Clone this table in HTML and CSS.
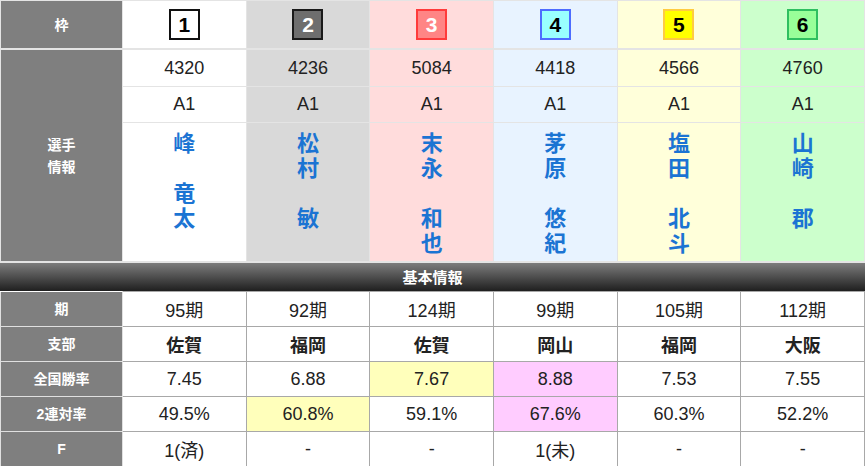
FILE: index.html
```html
<!DOCTYPE html>
<html lang="ja">
<head>
<meta charset="utf-8">
<title>出走表</title>
<link rel="stylesheet" href="styles.css">
</head>
<body>
<div class="racer-info">
  <table class="entry">
    <colgroup><col class="c-label"><col><col><col><col><col><col></colgroup>
    <tr class="r-head">
      <th class="lbl">枠</th>
      <td class="bg1"><span class="waku wk1">1</span></td>
      <td class="bg2"><span class="waku wk2">2</span></td>
      <td class="bg3"><span class="waku wk3">3</span></td>
      <td class="bg4"><span class="waku wk4">4</span></td>
      <td class="bg5"><span class="waku wk5">5</span></td>
      <td class="bg6"><span class="waku wk6">6</span></td>
    </tr>
    <tr class="r-num">
      <th class="lbl" rowspan="3">選手<br>情報</th>
      <td class="bg1">4320</td>
      <td class="bg2">4236</td>
      <td class="bg3">5084</td>
      <td class="bg4">4418</td>
      <td class="bg5">4566</td>
      <td class="bg6">4760</td>
    </tr>
    <tr class="r-cls">
      <td class="bg1">A1</td>
      <td class="bg2">A1</td>
      <td class="bg3">A1</td>
      <td class="bg4">A1</td>
      <td class="bg5">A1</td>
      <td class="bg6">A1</td>
    </tr>
    <tr class="r-name">
      <td class="bg1"><a class="name"><span>峰</span><span></span><span>竜</span><span>太</span></a></td>
      <td class="bg2"><a class="name"><span>松</span><span>村</span><span></span><span>敏</span></a></td>
      <td class="bg3"><a class="name"><span>末</span><span>永</span><span></span><span>和</span><span>也</span></a></td>
      <td class="bg4"><a class="name"><span>茅</span><span>原</span><span></span><span>悠</span><span>紀</span></a></td>
      <td class="bg5"><a class="name"><span>塩</span><span>田</span><span></span><span>北</span><span>斗</span></a></td>
      <td class="bg6"><a class="name"><span>山</span><span>崎</span><span></span><span>郡</span></a></td>
    </tr>
  </table>

  <div class="section-bar">基本情報</div>

  <table class="basic">
    <colgroup><col class="c-label"><col><col><col><col><col><col></colgroup>
    <tr>
      <th class="lbl">期</th>
      <td>95期</td><td>92期</td><td>124期</td><td>99期</td><td>105期</td><td>112期</td>
    </tr>
    <tr class="branch">
      <th class="lbl">支部</th>
      <td>佐賀</td><td>福岡</td><td>佐賀</td><td>岡山</td><td>福岡</td><td>大阪</td>
    </tr>
    <tr>
      <th class="lbl">全国勝率</th>
      <td>7.45</td><td>6.88</td><td class="hi-2">7.67</td><td class="hi-1">8.88</td><td>7.53</td><td>7.55</td>
    </tr>
    <tr>
      <th class="lbl">2連対率</th>
      <td>49.5%</td><td class="hi-2">60.8%</td><td>59.1%</td><td class="hi-1">67.6%</td><td>60.3%</td><td>52.2%</td>
    </tr>
    <tr>
      <th class="lbl">F</th>
      <td>1(済)</td><td>-</td><td>-</td><td>1(未)</td><td>-</td><td>-</td>
    </tr>
  </table>
</div>
</body>
</html>
```

FILE: styles.css
```css
html, body {
  margin: 0;
  padding: 0;
  background: #ffffff;
}

body {
  font-family: "Liberation Sans", Arial, "Noto Sans CJK JP", sans-serif;
  color: #222222;
  width: 865px;
  overflow: hidden;
}

.racer-info {
  width: 865px;
}

table {
  width: 865px;
  table-layout: fixed;
  border-collapse: collapse;
}

.c-label {
  width: 122px;
}

th.lbl {
  background: #7f7f7f;
  color: #ffffff;
  font-weight: bold;
  font-size: 14px;
  line-height: 22px;
  font-family: "Liberation Sans", Arial, "Noto Sans CJK JP", sans-serif;
  text-align: center;
  padding: 0;
}

/* entry (top) table */
.entry td,
.entry th {
  border: 1px solid #e4e4e4;
  text-align: center;
  padding: 0;
}

.entry td {
  font-size: 18px;
}

.r-head th,
.r-head td {
  height: 47px;
  border-bottom: 2px solid #e4e4e4;
}

.r-num td {
  height: 36px;
}

.r-cls td {
  height: 35px;
}

.r-name td {
  height: 138px;
  vertical-align: top;
}

.bg1 { background: #ffffff; }
.bg2 { background: #d9d9d9; }
.bg3 { background: #ffdcdc; }
.bg4 { background: #e8f3ff; }
.bg5 { background: #ffffda; }
.bg6 { background: #ccffcc; }

.waku {
  display: inline-block;
  box-sizing: border-box;
  width: 31px;
  height: 31px;
  line-height: 27px;
  border: 2px solid #000000;
  font-size: 21px;
  font-weight: bold;
  text-align: center;
  vertical-align: middle;
}

.wk1 { background: #ffffff; color: #000000; border-color: #111111; }
.wk2 { background: #6e6e6e; color: #ffffff; border-color: #1a1a1a; }
.wk3 { background: #ff8585; color: #ffffff; border-color: #ff3b3b; }
.wk4 { background: #99ffff; color: #000000; border-color: #4d6cff; }
.wk5 { background: #ffff00; color: #000000; border-color: #ffcc40; }
.wk6 { background: #99ff99; color: #000000; border-color: #2fbf60; }

.name {
  display: flex;
  flex-direction: column;
  align-items: center;
  padding-top: 6px;
  font-family: "Noto Sans CJK JP", sans-serif;
  font-size: 22px;
  font-weight: bold;
  color: #1b74d3;
  text-decoration: none;
}

.name span {
  display: block;
  height: 25px;
  line-height: 25px;
}

/* section bar */
.section-bar {
  height: 28px;
  border-top: 1px solid #e4e4e4;
  background: linear-gradient(#7c7c7c, #1f1f1f);
  color: #ffffff;
  font-family: "Noto Sans CJK JP", sans-serif;
  font-weight: bold;
  font-size: 15px;
  line-height: 28px;
  text-align: center;
}

/* basic info table */
.basic th.lbl {
  border: 1px solid #e0e0e0;
  border-top-color: #ffffff;
}

.basic td {
  height: 34px;
  border: 1px solid #a8a8a8;
  text-align: center;
  font-size: 18px;
  padding: 0;
  background: #ffffff;
}

.basic .branch td {
  font-weight: bold;
}

.basic td.hi-1 { background: #ffccff; }
.basic td.hi-2 { background: #ffffbb; }
```
